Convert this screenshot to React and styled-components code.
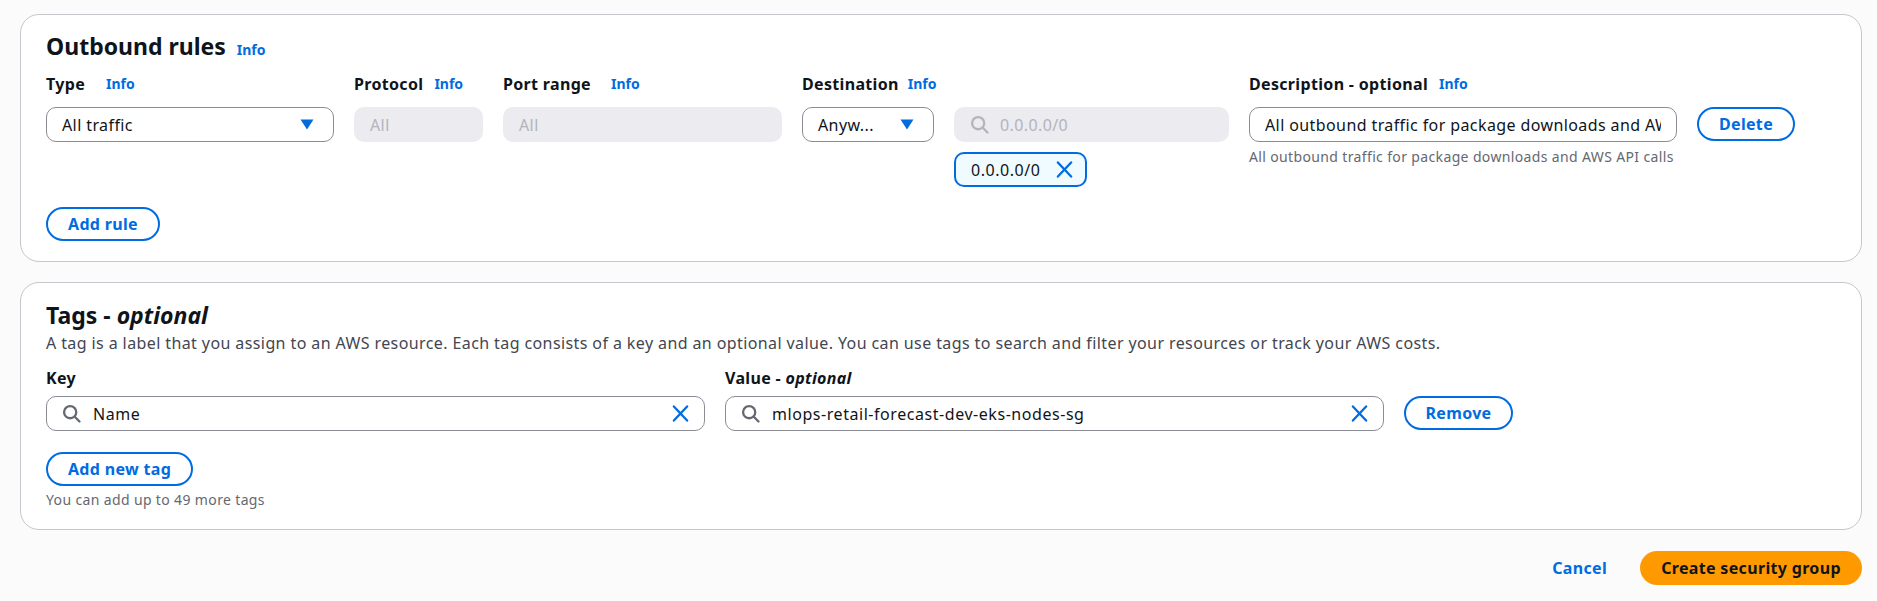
import styled, { createGlobalStyle } from "styled-components"

const GlobalStyle = createGlobalStyle`
    html, body {
        margin: 0;
        padding: 0;
        background: #fbfbfc;
    }
    * {
        box-sizing: border-box;
    }
    body {
        font-family: "Noto Sans", "Liberation Sans", Arial, sans-serif;
        font-size: 16px;
        letter-spacing: 0.4px;
        color: #0f141a;
    }
`

const SearchIcon = ({ color = "#656871" }) => (
    <svg width="19" height="19" viewBox="0 0 20 20" fill="none" stroke={color} strokeWidth="2.4">
        <circle cx="8.6" cy="8.6" r="6.4" />
        <path d="M13.2 13.2 L18.4 18.4" strokeLinecap="round" />
    </svg>
)

const CloseIcon = () => (
    <svg width="17" height="17" viewBox="0 0 18 18" fill="none" stroke="#006ce0" strokeWidth="2.4">
        <path d="M2 1.5 L16 16.5 M16 1.5 L2 16.5" strokeLinecap="round" />
    </svg>
)

const Caret = () => (
    <svg width="14" height="11" viewBox="0 0 14 11">
        <path d="M0.5 0.5 H13.5 L7 10.5 Z" fill="#006ce0" />
    </svg>
)

const App = () => {
    return (
        <Page>
            <GlobalStyle />
            <Card $top={16}>
                <Heading>
                    Outbound rules <InfoLink $large>Info</InfoLink>
                </Heading>
                <RuleRow>
                    <Column $width={288}>
                        <Label $gap={21} $bottom={12}>
                            Type
                            <InfoLink>Info</InfoLink>
                        </Label>
                        <Select>
                            <SelectText>All traffic</SelectText>
                            <Caret />
                        </Select>
                    </Column>
                    <Column $width={129}>
                        <Label $gap={11} $bottom={12}>
                            Protocol
                            <InfoLink>Info</InfoLink>
                        </Label>
                        <DisabledField>All</DisabledField>
                    </Column>
                    <Column $width={279}>
                        <Label $gap={20} $bottom={12}>
                            Port range
                            <InfoLink>Info</InfoLink>
                        </Label>
                        <DisabledField>All</DisabledField>
                    </Column>
                    <Column $width={132}>
                        <Label $gap={9} $bottom={12}>
                            Destination
                            <InfoLink>Info</InfoLink>
                        </Label>
                        <Select>
                            <SelectText>Anyw...</SelectText>
                            <Caret />
                        </Select>
                    </Column>
                    <Column $width={275}>
                        <LabelSpacer />
                        <DisabledField>
                            <SearchIcon color="#b4b4bb" />
                            <span>0.0.0.0/0</span>
                        </DisabledField>
                        <Token>
                            0.0.0.0/0
                            <CloseIcon />
                        </Token>
                    </Column>
                    <Column $width={428}>
                        <Label $gap={11} $bottom={12}>
                            Description - optional
                            <InfoLink>Info</InfoLink>
                        </Label>
                        <TextField>
                            <ClippedValue>All outbound traffic for package downloads and AWS API calls</ClippedValue>
                        </TextField>
                        <Hint $top={6}>All outbound traffic for package downloads and AWS API calls</Hint>
                    </Column>
                    <ButtonSlot $top={34}>
                        <OutlineButton $width={98}>Delete</OutlineButton>
                    </ButtonSlot>
                </RuleRow>
                <CardFooter $top={20}>
                    <OutlineButton $width={114}>Add rule</OutlineButton>
                </CardFooter>
            </Card>

            <Card $top={17}>
                <Heading>
                    Tags - <em>optional</em>
                </Heading>
                <Description>
                    A tag is a label that you assign to an AWS resource. Each tag consists of a key and an optional value. You can use tags to search and filter your resources or track your AWS costs.
                </Description>
                <TagRow>
                    <Column $width={659}>
                        <Label $bottom={7}>Key</Label>
                        <SearchField>
                            <SearchIcon />
                            <FieldValue>Name</FieldValue>
                            <CloseIcon />
                        </SearchField>
                    </Column>
                    <Column $width={659}>
                        <Label $bottom={7}>Value - <em>optional</em></Label>
                        <SearchField>
                            <SearchIcon />
                            <FieldValue>mlops-retail-forecast-dev-eks-nodes-sg</FieldValue>
                            <CloseIcon />
                        </SearchField>
                    </Column>
                    <ButtonSlot $top={29}>
                        <OutlineButton $width={109}>Remove</OutlineButton>
                    </ButtonSlot>
                </TagRow>
                <CardFooter $top={21}>
                    <OutlineButton $width={147}>Add new tag</OutlineButton>
                </CardFooter>
                <Hint $top={5}>You can add up to 49 more tags</Hint>
            </Card>

            <Actions>
                <CancelLink>Cancel</CancelLink>
                <PrimaryButton>Create security group</PrimaryButton>
            </Actions>
        </Page>
    )
}

const Page = styled.div`
    width: 1877px;
    height: 601px;
    padding: 14px 15px 0 20px;
    display: flex;
    flex-direction: column;
    gap: 20px;
    overflow: hidden;
`

const Card = styled.section`
    height: 248px;
    background: #fff;
    border: 1px solid #c6c6cd;
    border-radius: 19px;
    padding: ${(props) => props.$top}px 25px 0;
`

const Heading = styled.h2`
    margin: 0;
    height: 30px;
    font-size: 23px;
    line-height: 30px;
    font-weight: 700;
    letter-spacing: 0;
    em {
        font-weight: 700;
    }
`

const InfoLink = styled.a`
    color: #006ce0;
    font-size: 14px;
    line-height: 1;
    font-weight: 700;
    letter-spacing: 0;
    margin-left: ${(props) => (props.$large ? "5px" : "0")};
`

const RuleRow = styled.div`
    display: flex;
    gap: 20px;
    margin-top: 12px;
`

const TagRow = styled.div`
    display: flex;
    gap: 20px;
    margin-top: 13px;
`

const Column = styled.div`
    width: ${(props) => props.$width}px;
    display: flex;
    flex-direction: column;
    flex-shrink: 0;
`

const Label = styled.label`
    display: flex;
    align-items: center;
    gap: ${(props) => props.$gap || 0}px;
    height: 22px;
    margin-bottom: ${(props) => props.$bottom}px;
    font-size: 16px;
    font-weight: 700;
    letter-spacing: 0.33px;
    white-space: pre;
    em {
        font-weight: 700;
    }
`

const LabelSpacer = styled.div`
    height: 34px;
`

const fieldBase = `
    height: 35px;
    border-radius: 10px;
    display: flex;
    align-items: center;
    font-size: 16px;
`

const Select = styled.div`
    ${fieldBase}
    background: #fff;
    border: 1px solid #8c8c94;
    padding: 0 19px 0 15px;
    justify-content: space-between;
`

const SelectText = styled.span`
    white-space: nowrap;
`

const DisabledField = styled.div`
    ${fieldBase}
    background: #ebebf0;
    color: #b4b4bb;
    padding: 0 16px;
    gap: 11px;
`

const Token = styled.div`
    height: 35px;
    width: 133px;
    margin-top: 10px;
    padding: 0 12px 0 15px;
    display: flex;
    align-items: center;
    justify-content: space-between;
    font-size: 16px;
    letter-spacing: 0.55px;
    background: #f0fbff;
    border: 2px solid #006ce0;
    border-radius: 10px;
`

const TextField = styled.div`
    ${fieldBase}
    background: #fff;
    border: 1px solid #8c8c94;
    padding: 0 15px;
`

const ClippedValue = styled.span`
    flex: 1;
    min-width: 0;
    white-space: nowrap;
    overflow: hidden;
`

const SearchField = styled.div`
    ${fieldBase}
    background: #fff;
    border: 1px solid #8c8c94;
    padding: 0 15px;
    gap: 12px;
`

const FieldValue = styled.span`
    flex: 1;
    white-space: nowrap;
    letter-spacing: 0.55px;
`

const Hint = styled.div`
    margin-top: ${(props) => props.$top}px;
    font-size: 14px;
    line-height: 18px;
    letter-spacing: 0.36px;
    color: #656871;
    white-space: nowrap;
`

const Description = styled.p`
    margin: 2px 0 0;
    font-size: 16px;
    line-height: 22px;
    color: #424650;
    white-space: nowrap;
`

const ButtonSlot = styled.div`
    padding-top: ${(props) => props.$top}px;
`

const OutlineButton = styled.button`
    width: ${(props) => props.$width}px;
    height: 34px;
    padding: 0;
    background: #fff;
    color: #006ce0;
    border: 2px solid #006ce0;
    border-radius: 20px;
    font-family: inherit;
    font-size: 16px;
    font-weight: 700;
    letter-spacing: 0.33px;
`

const CardFooter = styled.div`
    margin-top: ${(props) => props.$top}px;
`

const Actions = styled.div`
    display: flex;
    justify-content: flex-end;
    align-items: center;
    gap: 33px;
    margin-top: 1px;
`

const CancelLink = styled.a`
    color: #006ce0;
    font-size: 16px;
    font-weight: 700;
    letter-spacing: 0.33px;
`

const PrimaryButton = styled.button`
    width: 222px;
    height: 34px;
    padding: 0;
    background: #ff9900;
    color: #0f141a;
    border: none;
    border-radius: 20px;
    font-family: inherit;
    font-size: 16px;
    font-weight: 700;
    letter-spacing: 0.33px;
`

export default App
